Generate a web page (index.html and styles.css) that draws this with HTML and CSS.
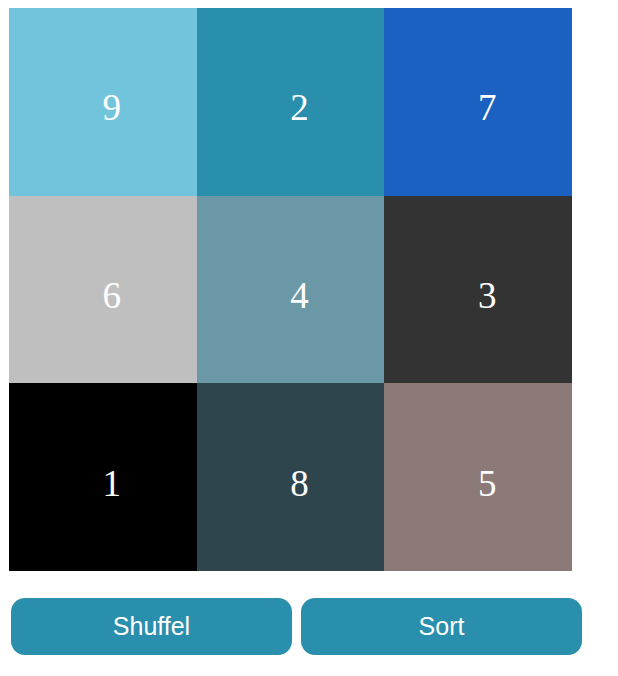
FILE: index.html
```html
<!DOCTYPE html>
<html>
<head>
<meta charset="utf-8">
<link rel="stylesheet" href="styles.css">
</head>
<body>
<div class="board">
  <div class="tile c9">9</div>
  <div class="tile c2">2</div>
  <div class="tile c7">7</div>
  <div class="tile c6">6</div>
  <div class="tile c4">4</div>
  <div class="tile c3">3</div>
  <div class="tile c1">1</div>
  <div class="tile c8">8</div>
  <div class="tile c5">5</div>
</div>
<div class="actions">
  <button class="btn">Shuffel</button>
  <button class="btn">Sort</button>
</div>
</body>
</html>
```

FILE: styles.css
```css
html, body {
  margin: 0;
  padding: 0;
  background: #ffffff;
}
body {
  padding: 8px 0 0 9px;
}
.board {
  width: 563px;
  height: 563px;
  display: grid;
  grid-template-columns: repeat(3, 1fr);
  grid-template-rows: repeat(3, 1fr);
}
.tile {
  display: flex;
  align-items: center;
  justify-content: center;
  padding: 12px 0 0 18px;
  color: #ffffff;
  font-family: "Liberation Serif", "Times New Roman", serif;
  font-size: 37px;
}
.c9 { background: #72c4dc; }
.c2 { background: #2a8fac; }
.c7 { background: #1b61c1; }
.c6 { background: #bfbfbf; }
.c4 { background: #6b98a7; }
.c3 { background: #333333; }
.c1 { background: #000000; }
.c8 { background: #2f454e; }
.c5 { background: #8b7a78; }
.actions {
  display: flex;
  gap: 9px;
  margin: 27px 0 0 2px;
}
.btn {
  width: 281px;
  height: 57px;
  border: none;
  border-radius: 14px;
  background: #2a8fac;
  color: #ffffff;
  font-family: "Liberation Sans", Arial, sans-serif;
  font-size: 25px;
  padding: 0;
  cursor: pointer;
}
```
